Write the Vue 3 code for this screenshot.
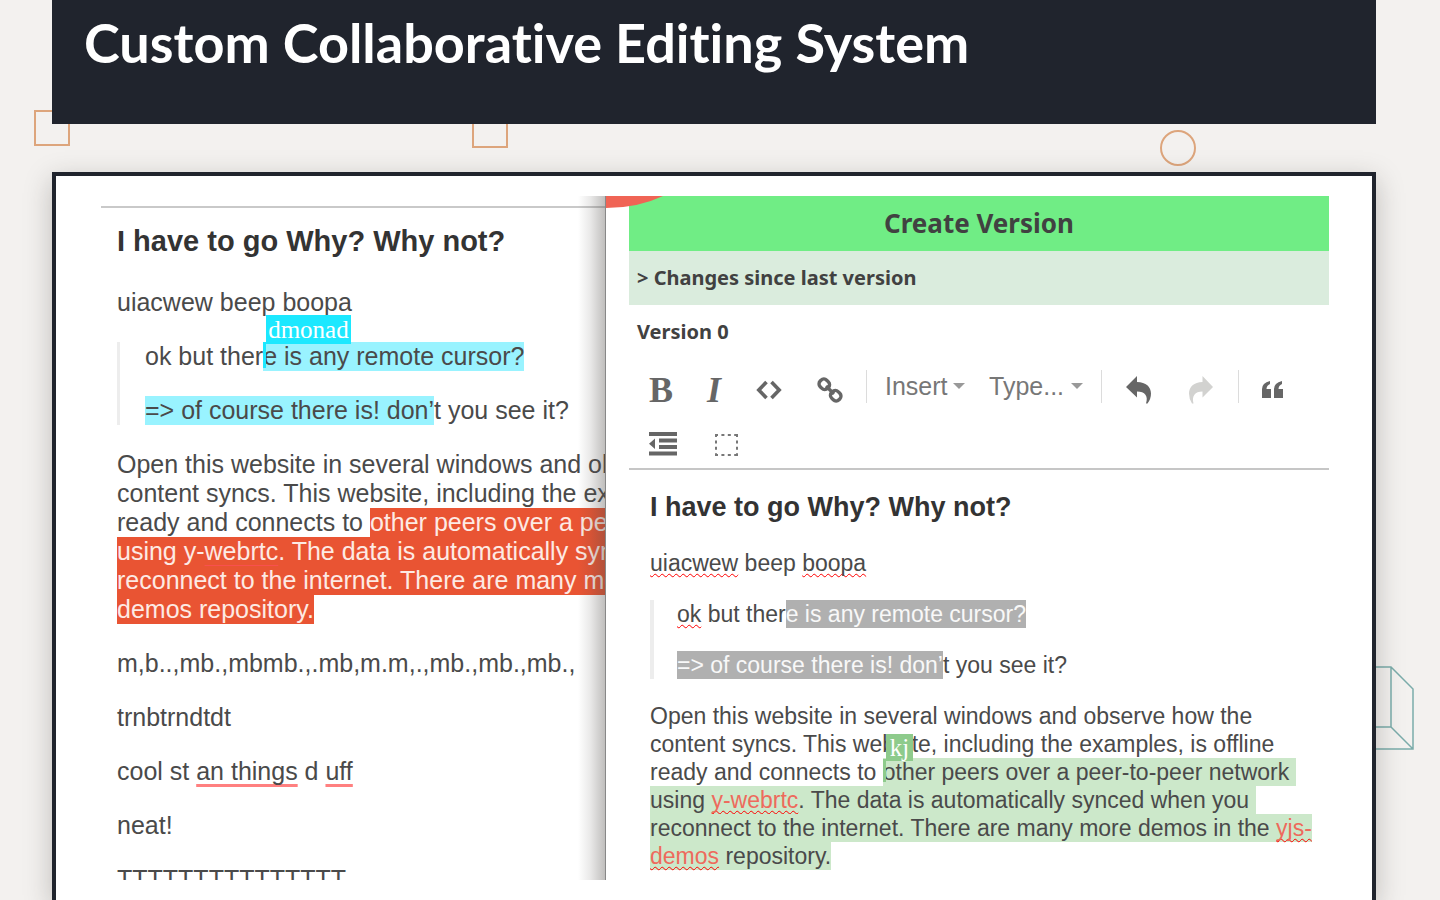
<script setup>
import { ref } from 'vue'

const insertMenu = ref('Insert')
const typeMenu = ref('Type...')
</script>

<template>
  <div class="page">
    <span class="shape square square-a"></span>
    <span class="shape square square-b"></span>
    <span class="shape circle"></span>
    <svg class="cube" width="84" height="84" viewBox="0 0 84 84" fill="none" stroke="#7bacaa" stroke-width="1.500" aria-hidden="true">
      <path d="M1 1H61L83 23V83H23L1 61ZM61 1V61H1M61 61L83 83" />
    </svg>

    <header class="banner">
      <h1>Custom Collaborative Editing System</h1>
    </header>

    <main class="frame">
      <div class="stage">
        <section class="pane left" aria-label="Remote editor">
          <div class="rule"></div>
          <article class="doc large">
            <h2>I have to go Why? Why not?</h2>
            <p>uiacwew beep boopa</p>
            <blockquote>
              <p>ok but ther<mark class="cyan"><span class="cursor"><span class="name">dmonad</span></span>e is any remote cursor?</mark></p>
              <p><mark class="cyan">=&gt; of course there is! don’</mark>t you see it?</p>
            </blockquote>
            <p>
              Open this website in several windows and observe how the<br />content syncs. This website, including the examples, is offline<br />ready and connects to <mark class="red">other peers over a peer-to-peer network<br />using y-<span class="faint">webrtc</span>. The data is automatically synced when you<br />reconnect to the internet. There are many more demos in the yjs-<br />demos repository.</mark>
            </p>
            <p>m,b..,mb.,mbmb.,.mb,m.m,.,mb.,mb.,mb.,</p>
            <p>trnbtrndtdt</p>
            <p>cool st <span class="edited">an things</span> d <span class="edited">uff</span></p>
            <p>neat!</p>
            <p>TTTTTTTTTTTTTTT</p>
          </article>
        </section>

        <section class="pane right" aria-label="Local editor">
          <svg class="blob" width="57" height="12" viewBox="0 0 57 12" aria-hidden="true">
            <path d="M0 0H57Q32 12 0 12Z" fill="#f06455" />
          </svg>
          <button class="create" type="button">Create Version</button>
          <div class="version current">&gt; Changes since last version</div>
          <div class="version">Version 0</div>

          <div class="toolbar">
            <div class="row">
              <div class="group marks">
                <button type="button" class="letter" aria-label="Bold">B</button>
                <button type="button" class="letter slanted" aria-label="Italic">I</button>
                <button type="button" aria-label="Code">
                  <svg width="28" height="26" viewBox="0 0 28 26" fill="none" stroke="#666" stroke-width="3.600">
                    <path d="M11.500 5L3.800 13L11.500 21M16.500 5L24.200 13L16.500 21" />
                  </svg>
                </button>
                <button type="button" aria-label="Link">
                  <svg width="26" height="26" viewBox="0 0 26 26" fill="none" stroke="#666" stroke-width="3.400">
                    <rect x="-5.200" y="-4.600" width="10.400" height="9.200" rx="4" transform="translate(7.300 7.300) rotate(45)" />
                    <rect x="-5.200" y="-4.600" width="10.400" height="9.200" rx="4" transform="translate(18.700 18.700) rotate(45)" />
                    <path d="M9 9L17 17" />
                  </svg>
                </button>
              </div>
              <div class="group menus">
                <label class="menu insert">
                  <select v-model="insertMenu" aria-label="Insert"><option>Insert</option></select>
                  <svg width="12" height="7" viewBox="0 0 12 7" aria-hidden="true"><path d="M0 0H12L6 6Z" fill="#999" /></svg>
                </label>
                <label class="menu type">
                  <select v-model="typeMenu" aria-label="Type"><option>Type...</option></select>
                  <svg width="12" height="7" viewBox="0 0 12 7" aria-hidden="true"><path d="M0 0H12L6 6Z" fill="#999" /></svg>
                </label>
              </div>
              <div class="group history">
                <button type="button" aria-label="Undo">
                  <svg width="26" height="28" viewBox="0 0 26 28" fill="#666"><path d="M0 11L11 0V6C20 6 25 11 25 17.500Q25 23 21.500 27.500H20C22.500 20 19 15.500 11 15.500V21.500Z" /></svg>
                </button>
                <button type="button" aria-label="Redo" disabled>
                  <svg width="26" height="28" viewBox="0 0 26 28" fill="#d2d2d0"><path d="M25 11L14.500 0V6C6 6 1 11 1 17.500Q1 23 4 27.500H5.500C3.500 20 7 15.500 14.500 15.500V21.500Z" /></svg>
                </button>
              </div>
              <div class="group quote">
                <button type="button" aria-label="Block quote">
                  <svg width="22" height="18" viewBox="0 0 22 18" fill="#666">
                    <path d="M0 17V8Q0 2 8 0V3Q4.500 4.500 4.500 8H9V17ZM12 17V8Q12 2 20 0V3Q16.500 4.500 16.500 8H21V17Z" />
                  </svg>
                </button>
              </div>
            </div>
            <div class="row second">
              <button type="button" aria-label="Outdent">
                <svg width="28" height="24" viewBox="0 0 28 24" fill="#666">
                  <path d="M0 0H28V4H0ZM10 6.500H28V10.500H10ZM10 13H28V17H10ZM0 19.500H28V23.500H0ZM6 6.500V17L0 11.700Z" />
                </svg>
              </button>
              <button type="button" aria-label="Select parent node">
                <svg width="26" height="26" viewBox="0 0 26 26" fill="none" stroke="#777" stroke-width="2" stroke-dasharray="3 3.400">
                  <path d="M2 4H25M2 24H25" />
                  <path d="M3 3V25M24 3V25" />
                </svg>
              </button>
            </div>
          </div>

          <article class="doc small">
            <h2>I have to go Why? Why not?</h2>
            <p><span class="typo">uiacwew</span> beep <span class="typo">boopa</span></p>
            <blockquote>
              <p><span class="typo">ok</span> but ther<mark class="gray">e is any remote cursor?</mark></p>
              <p><mark class="gray">=&gt; of course there is! don’</mark>t you see it?</p>
            </blockquote>
            <p>
              Open this website in several windows and observe how the<br />content syncs. This website, including the examples, is offline<br />ready and connects to <mark class="green"><span class="cursor"><span class="name">kj</span></span>other peers over a peer-to-peer network&nbsp;<br />using <a class="typo" href="#y-webrtc">y-webrtc</a>. The data is automatically synced when you&nbsp;<br />reconnect to the internet. There are many more demos in the <a class="typo" href="#yjs-demos">yjs-<br />demos</a> repository.</mark>
            </p>
          </article>
        </section>
      </div>
    </main>
  </div>
</template>

<style>
body {
  margin: 0;
  background: #f3f1ef;
}
</style>

<style scoped>
.page {
  position: relative;
  display: flex;
  flex-direction: column;
  height: 100vh;
  overflow: hidden;
  background: #f3f1ef;
  font-family: "Liberation Sans", Arial, sans-serif;
  color: #4a4a4a;
}
.shape {
  position: absolute;
  box-sizing: border-box;
  width: 36px;
  height: 36px;
  border: 2px solid #dda57c;
}
.square-a { left: 34px; top: 110px; }
.square-b { left: 472px; top: 112px; }
.circle { right: 244px; top: 130px; border-radius: 50%; }
.cube { position: absolute; right: 26px; top: 666px; }

.banner {
  position: relative;
  box-sizing: border-box;
  flex: none;
  height: 124px;
  margin: 0 64px 48px 52px;
  padding: 11px 32px;
  background: #20242d;
}
h1 {
  margin: 0;
  font: 700 54px/64px Lato, sans-serif;
  font-variant-ligatures: none;
  color: #fff;
  white-space: nowrap;
}

.frame {
  position: relative;
  display: flex;
  flex: 1;
  min-height: 0;
  margin: 0 64px 0 52px;
  padding: 20px 43px 20px 45px;
  border: 4px solid #20242d;
  border-bottom: 0;
  background: #fff;
  box-shadow: 0 8px 26px rgba(40, 36, 32, 0.26);
}
.stage {
  display: grid;
  grid-template-columns: 505fr 723fr;
  flex: 1;
  min-width: 0;
  overflow: hidden;
}
.pane {
  position: relative;
  min-width: 0;
  overflow: hidden;
}
.left::after {
  content: "";
  position: absolute;
  top: 0;
  right: 0;
  bottom: 0;
  width: 28px;
  box-sizing: border-box;
  border-right: 1px solid #888;
  background: linear-gradient(to right, rgba(80, 76, 72, 0), rgba(80, 76, 72, 0.12) 45%, rgba(80, 76, 72, 0.36));
}
.rule {
  height: 2px;
  margin-top: 10px;
  background: #c9c9c9;
}
.right { padding-left: 23px; }
.blob { position: absolute; left: 0; top: 0; }

.create {
  display: block;
  width: 100%;
  height: 55px;
  padding: 0;
  border: 0;
  background: #70ed85;
  color: #414141;
  font: 700 26px/55px "Noto Sans", sans-serif;
}
.version {
  padding-left: 8px;
  font: 700 20px/54px "Noto Sans", sans-serif;
  color: #414141;
}
.current { background: #daecdd; }

.toolbar {
  padding: 11px 0 8px 20px;
  border-bottom: 2px solid #c6c6c6;
}
.row {
  display: flex;
  height: 33px;
}
.second {
  margin-top: 24px;
  align-items: center;
  gap: 36px;
}
.toolbar button {
  display: flex;
  align-items: center;
  padding: 0;
  border: 0;
  background: none;
  color: #666;
}
.group { display: flex; align-items: center; }
.group button { padding-top: 6px; }
.group + .group { border-left: 1px solid #dcdcdc; }
.marks { gap: 34px; padding-right: 23px; }
.menus { gap: 24px; padding: 0 18px; }
.history { gap: 36px; padding: 0 24px; }
.quote { padding-left: 23px; }
.toolbar .letter { width: 24px; font: 700 36px/28px "Liberation Serif", serif; }
.toolbar .slanted { width: 14px; font-style: italic; }
.menu {
  display: flex;
  align-items: center;
  justify-content: space-between;
}
.insert { width: 80px; }
.type { width: 94px; }
.menu select {
  appearance: none;
  padding: 0;
  border: 0;
  background: none;
  color: #777;
  font: 25px/33px "Liberation Sans", Arial, sans-serif;
}

.doc { white-space: nowrap; }
.doc h2, .doc p, .doc blockquote { margin: 0; }
.doc h2 { color: #333; }
.large { padding: 16px 0 0 16px; font-size: 25px; line-height: 29px; }
.large h2 { margin-bottom: 30px; font-size: 29px; line-height: 34px; }
.large p + p, .large p + blockquote, .large blockquote + p { margin-top: 25px; }
.large blockquote { padding-left: 25px; border-left: 3px solid #ededed; }
.small { padding: 21px 0 0 21px; font-size: 23px; line-height: 28px; }
.small h2 { margin-bottom: 26px; font-size: 27px; line-height: 32px; }
.small p + p, .small p + blockquote, .small blockquote + p { margin-top: 23px; }
.small blockquote { padding-left: 23px; border-left: 4px solid #ededed; }

mark { color: inherit; background: none; }
.large mark {
  padding-bottom: 1px;
  box-decoration-break: clone;
  -webkit-box-decoration-break: clone;
}
.small mark {
  padding: 1px 0;
  box-decoration-break: clone;
  -webkit-box-decoration-break: clone;
}
.large .cyan { background: #99f3ff; }
.large .red { background: #e95433; color: #fdeae4; }
.small .gray { background: #b0b0b0; color: #f8f8f8; }
.small .green { background: #cce8ca; }
.faint {
  text-decoration: underline 2px #f8504f;
  text-decoration-skip-ink: none;
  text-underline-offset: 5px;
}
.edited {
  text-decoration: underline 3px #ff8080;
  text-decoration-skip-ink: none;
  text-underline-offset: 4px;
}
.typo {
  text-decoration: underline wavy 1px #ff0000;
  text-decoration-skip-ink: none;
  text-underline-offset: 2px;
}
a { color: #ee6a5c; }

.cursor { position: relative; }
.cursor::before {
  content: "";
  position: absolute;
  left: 0;
  top: 0;
  width: 3px;
  height: 26px;
  background: #1ce8ff;
}
.name {
  position: absolute;
  left: 3px;
  bottom: 26px;
  padding: 0 2px;
  background: #1ce8ff;
  color: #fff;
  font: 25px/29px "Liberation Serif", serif;
}
.small .cursor::before { height: 23px; background: #8ecb8c; }
.small .name {
  bottom: 24px;
  padding: 0 4px;
  background: #8ecb8c;
  font-size: 25px;
  line-height: 27px;
}
</style>
